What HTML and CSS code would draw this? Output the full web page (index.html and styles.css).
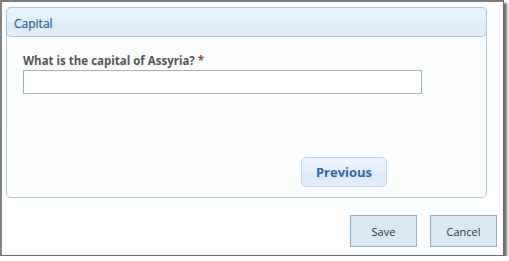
FILE: index.html
```html
<!DOCTYPE html>
<html lang="en">
<head>
  <meta charset="UTF-8">
  <meta name="viewport" content="width=device-width, initial-scale=1.0">
  <title>Capital</title>
  <link rel="stylesheet" href="styles.css">
</head>
<body>

  <div class="window">
    <div class="panel">
      <div class="panel-header">Capital</div>
      <div class="panel-body">
        <label for="answer" class="question">What is the capital of Assyria? <span class="required">*</span></label>
        <input type="text" id="answer" class="answer">
        <div class="nav">
          <button class="nav-button">Previous</button>
        </div>
      </div>
    </div>

    <div class="actions">
      <button class="action-button">Save</button>
      <button class="action-button">Cancel</button>
    </div>
  </div>

</body>
</html>
```

FILE: styles.css
```css
* {
  margin: 0;
  padding: 0;
  box-sizing: border-box;
  font-family: "Open Sans", "Noto Sans", sans-serif;
}

body {
  background-color: #fff;
}

.window {
  width: 504px;
  height: 256px;
  border-top: 2px solid #7d7d7d;
  border-left: 2px solid #838383;
  border-right: 1px solid #6a6a6a;
  border-bottom: 1px solid #6a6a6a;
  box-shadow: 3px 3px 2px rgba(0, 0, 0, 0.55);
  background-color: #fff;
  padding: 5px 0 0 4px;
}

.panel {
  width: 481px;
  height: 191px;
  border: 1px solid #aacbe2;
  border-radius: 5px;
  background: linear-gradient(#fbfdfd, #fbfdfd 60%, #fcfefe);
  display: flex;
  flex-direction: column;
}

.panel-header {
  margin: -1px -1px 0;
  height: 30px;
  border: 1px solid #a9c9e2;
  border-radius: 5px;
  background: linear-gradient(#e9f3fc, #e3effb 50%, #dbeaf9 55%, #e2eefa);
  color: #23639d;
  font-size: 12px;
  padding: 9px 0 0 7px;
  line-height: 14px;
  -webkit-text-stroke: 0.2px #23639d;
}

.panel-body {
  flex: 1;
  display: flex;
  flex-direction: column;
  padding: 17px 0 0 16px;
}

.question {
  font-size: 11.5px;
  font-weight: bold;
  color: #555;
  line-height: 13px;
}

.required {
  color: #8c4a3c;
}

.answer {
  margin-top: 3px;
  width: 399px;
  height: 24px;
  border: 1px solid #9fb3c4;
  background-color: #fff;
  outline: none;
}

.nav {
  display: flex;
  justify-content: flex-end;
  margin-top: 63px;
  padding-right: 99px;
}

.nav-button {
  width: 86px;
  height: 30px;
  border: 1px solid #bcd6ec;
  border-radius: 5px;
  background: linear-gradient(#eef5fd, #e4effb 50%, #dbe9f8 55%, #e3eefb);
  color: #2e6a9f;
  font-size: 13px;
  font-weight: bold;
  cursor: pointer;
}

.actions {
  display: flex;
  justify-content: flex-end;
  gap: 13px;
  margin-top: 17px;
  padding-right: 6px;
}

.action-button {
  width: 67px;
  height: 32px;
  border: 1px solid #8fb3cc;
  background-color: #dae8f4;
  color: #333;
  font-size: 11px;
  cursor: pointer;
}
```
